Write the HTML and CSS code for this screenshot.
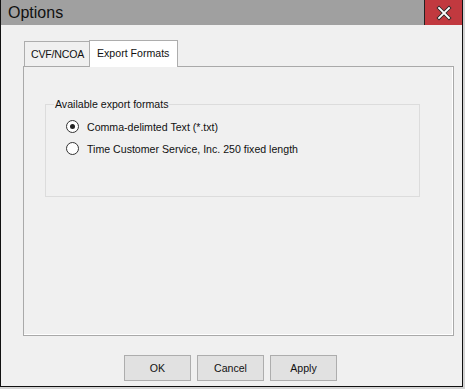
FILE: index.html
```html
<!DOCTYPE html>
<html lang="en">
<head>
  <meta charset="UTF-8">
  <title>Options</title>
  <link rel="stylesheet" href="styles.css">
</head>
<body>
  <div class="window">
    <div class="titlebar">
      <span class="title">Options</span>
      <span class="close">
        <svg width="16" height="16" viewBox="0 0 16 16">
          <path d="M3 3 L13 13 M13 3 L3 13" stroke="#2a2a2a" stroke-width="3.6" stroke-linecap="square"/>
          <path d="M3 3 L13 13 M13 3 L3 13" stroke="#fff" stroke-width="1.8" stroke-linecap="square"/>
        </svg>
      </span>
    </div>

    <div class="body">
      <!-- tabs -->
      <div class="tabs">
        <div class="tab">CVF/NCOA</div>
        <div class="tab selected">Export Formats</div>
      </div>

      <div class="panel">
        <fieldset class="group">
          <legend>Available export formats</legend>
          <div class="options">
            <label class="option"><span class="radio checked"></span>Comma-delimted Text (*.txt)</label>
            <label class="option"><span class="radio"></span>Time Customer Service, Inc. 250 fixed length</label>
          </div>
        </fieldset>
      </div>

      <!-- buttons -->
      <div class="buttons">
        <button>OK</button>
        <button>Cancel</button>
        <button>Apply</button>
      </div>
    </div>
  </div>
</body>
</html>
```

FILE: styles.css
```css
body {
  margin: 0;
  background-color: #d4d4d4;
  font-family: "Liberation Sans", Arial, sans-serif;
  font-size: 10.6px;
  color: #000;
}

.window {
  width: 461px;
  height: 386px;
  background-color: #f0f0f0;
  border-left: 1px solid #111;
  border-right: 1px solid #111;
  border-bottom: 1px solid #111;
  display: flex;
  flex-direction: column;
}

.titlebar {
  height: 25px;
  background-color: #a0a0a0;
  display: flex;
  align-items: center;
  justify-content: space-between;
}

.title {
  padding-left: 7px;
  font-size: 16px;
  color: #111;
}

.close {
  width: 37px;
  height: 25px;
  background-color: #c1393f;
  border-left: 1px solid #222;
  display: flex;
  align-items: center;
  justify-content: center;
}

.body {
  display: flex;
  flex-direction: column;
  padding-left: 22px;
}

.tabs {
  display: flex;
  align-items: flex-end;
  margin-top: 14px;
  padding-left: 1px;
  height: 27px;
}

.tab {
  height: 24px;
  width: 58px;
  padding-left: 6px;
  border: 1px solid #adadad;
  border-bottom: none;
  border-right: none;
  display: flex;
  align-items: center;
  color: #111;
  letter-spacing: -0.2px;
}

.tab.selected {
  height: 27px;
  width: 89px;
  padding-left: 7px;
  padding-top: 6px;
  box-sizing: border-box;
  border-right: 1px solid #adadad;
  background-color: #fff;
  align-items: flex-start;
  letter-spacing: 0;
  margin-bottom: -1px;
  position: relative;
}

.panel {
  width: 408px;
  height: 268px;
  border: 1px solid #a9a9a9;
  box-shadow: inset -1px -1px 0 #fff;
  padding: 0 0 0 21px;
}

.group {
  margin: 31px 0 0 0;
  width: 357px;
  height: 99px;
  border: 1px solid #dcdcdc;
  padding: 0 8px;
  box-sizing: border-box;
  width: 375px;
}

.group legend {
  padding: 0 1px;
  color: #111;
}

.options {
  padding-left: 12px;
  padding-top: 10px;
  display: flex;
  flex-direction: column;
  gap: 9px;
}

.option {
  display: flex;
  align-items: center;
  height: 13px;
  color: #111;
}

.radio {
  width: 11px;
  height: 11px;
  border: 1px solid #333;
  border-radius: 50%;
  background-color: #fff;
  margin-right: 8px;
  display: flex;
  align-items: center;
  justify-content: center;
}

.radio.checked::after {
  content: "";
  width: 5px;
  height: 5px;
  border-radius: 50%;
  background-color: #222;
}

.buttons {
  display: flex;
  gap: 6px;
  margin-top: 19px;
  padding-left: 101px;
}

button {
  width: 67px;
  height: 26px;
  border: 1px solid #adadad;
  background-color: #e1e1e1;
  font-family: "Liberation Sans", Arial, sans-serif;
  font-size: 10.6px;
  color: #111;
  padding: 0;
}
```
